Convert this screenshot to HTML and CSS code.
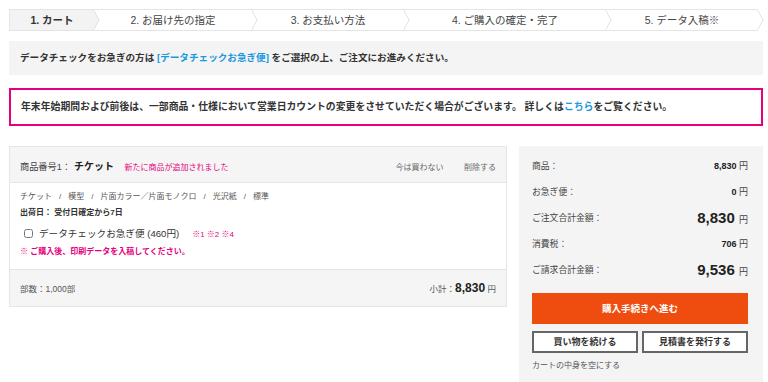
FILE: index.html
```html
<!DOCTYPE html>
<html lang="ja">
<head>
  <meta charset="UTF-8">
  <title>カート</title>
  <link rel="stylesheet" href="styles.css">
</head>
<body>
  <!-- ステップ -->
  <ol class="steps">
    <li class="step step-1 is-current">1. カート</li>
    <li class="step step-2">2. お届け先の指定</li>
    <li class="step step-3">3. お支払い方法</li>
    <li class="step step-4">4. ご購入の確定・完了</li>
    <li class="step step-5">5. データ入稿※</li>
  </ol>

  <div class="info-bar">
    データチェックをお急ぎの方は <a href="#" class="link">[データチェックお急ぎ便]</a> をご選択の上、ご注文にお進みください。
  </div>

  <div class="notice">
    年末年始期間および前後は、一部商品・仕様において営業日カウントの変更をさせていただく場合がございます。 詳しくは<a href="#" class="link">こちら</a>をご覧ください。
  </div>

  <div class="main">
    <!-- カート商品 -->
    <div class="cart-item">
      <div class="item-head">
        <div class="item-title">
          <span class="item-no">商品番号1：</span><span class="item-name">チケット</span>
          <span class="item-added">新たに商品が追加されました</span>
        </div>
        <div class="item-actions">
          <a href="#">今は買わない</a>
          <a href="#">削除する</a>
        </div>
      </div>
      <div class="item-body">
        <p class="item-spec">
          <span>チケット</span><span class="sep">/</span><span>模型</span><span class="sep">/</span><span>片面カラー／片面モノクロ</span><span class="sep">/</span><span>光沢紙</span><span class="sep">/</span><span>標準</span>
        </p>
        <p class="item-ship">出荷日： 受付日確定から7日</p>
        <label class="item-option">
          <input type="checkbox">
          <span class="option-name">データチェックお急ぎ便 (460円)</span>
          <span class="option-note">※1 ※2 ※4</span>
        </label>
        <p class="item-warn">※ ご購入後、印刷データを入稿してください。</p>
      </div>
      <div class="item-foot">
        <span>部数：1,000部</span>
        <span>小計：<b class="subtotal">8,830</b> 円</span>
      </div>
    </div>

    <!-- 合計 -->
    <div class="summary">
      <div class="sum-row"><span>商品：</span><span class="price">8,830 <small>円</small></span></div>
      <div class="sum-row"><span>お急ぎ便：</span><span class="price">0 <small>円</small></span></div>
      <div class="sum-row"><span>ご注文合計金額：</span><span class="price price-big">8,830 <small>円</small></span></div>
      <div class="sum-row"><span>消費税：</span><span class="price">706 <small>円</small></span></div>
      <div class="sum-row"><span>ご請求合計金額：</span><span class="price price-big">9,536 <small>円</small></span></div>
      <a href="#" class="btn-buy">購入手続きへ進む</a>
      <div class="sub-btns">
        <a href="#" class="btn-sub">買い物を続ける</a>
        <a href="#" class="btn-sub">見積書を発行する</a>
      </div>
      <a href="#" class="empty-link">カートの中身を空にする</a>
    </div>
  </div>
</body>
</html>
```

FILE: styles.css
```css
/* 全体 */
body {
  margin: 0;
  padding: 9px 5px 0 9px;
  font-family: "Liberation Sans", "Noto Sans CJK JP", sans-serif;
  color: #333;
  background: #fff;
  overflow: hidden;
}

a {
  text-decoration: none;
  color: inherit;
}

p {
  margin: 0;
}

.link {
  color: #1a98e0;
}

/* ステップ */
.steps {
  display: flex;
  list-style: none;
  margin: 0;
  padding: 0;
  height: 20px;
  border-top: 1px solid #e4e4e4;
  border-bottom: 1px solid #e4e4e4;
  border-left: 1px solid #e4e4e4;
  width: 748px;
}

.step {
  position: relative;
  font-size: 10.5px;
  line-height: 20px;
  text-align: center;
  color: #444;
  background: #fff;
}

.step::after {
  content: "";
  position: absolute;
  top: 3px;
  right: -7px;
  width: 13px;
  height: 13px;
  border-top: 1px solid #dcdcdc;
  border-right: 1px solid #dcdcdc;
  background: inherit;
  transform: scaleX(0.55) rotate(45deg);
  z-index: 1;
}

.step-1 { width: 84px; }
.step-2 { width: 158px; }
.step-3 { width: 152px; }
.step-4 { width: 202px; }
.step-5 { width: 152px; }

.is-current {
  background: #f3f3f3;
  font-weight: bold;
  color: #333;
}

/* お知らせ */
.info-bar {
  margin-top: 10px;
  background: #f4f4f4;
  height: 34px;
  line-height: 34px;
  padding: 0 11px;
  font-size: 9.6px;
  font-weight: bold;
}

.notice {
  margin-top: 13px;
  border: 2px solid #e6007e;
  height: 34px;
  line-height: 34px;
  padding: 0 10px;
  font-size: 9.85px;
  font-weight: bold;
}

/* メイン */
.main {
  margin-top: 20px;
  display: flex;
  align-items: flex-start;
  gap: 12px;
}

.cart-item {
  width: 496px;
  border: 1px solid #e6e6e6;
}

.item-head {
  height: 35px;
  background: #f5f5f5;
  border-bottom: 1px solid #e6e6e6;
  display: flex;
  justify-content: space-between;
  align-items: center;
  padding: 0 10px;
}

.item-no {
  font-size: 9.2px;
  color: #444;
  margin-right: 3px;
}

.item-name {
  font-size: 10px;
  font-weight: bold;
  color: #222;
  margin-right: 6px;
}

.item-added {
  font-size: 8px;
  color: #e6007e;
}

.item-actions a {
  font-size: 8px;
  color: #666;
  margin-left: 16px;
}

.item-body {
  padding: 6px 10px 10px;
  font-size: 8px;
}

.item-spec {
  line-height: 16px;
  color: #555;
}

.sep {
  margin: 0 7px;
}

.item-ship {
  line-height: 16px;
  font-weight: bold;
  color: #333;
}

.item-option {
  display: flex;
  align-items: center;
  height: 24px;
  padding-left: 4px;
}

.item-option input {
  width: 9px;
  height: 9px;
  margin: 0 6px 0 0;
}

.option-name {
  font-size: 9.6px;
  color: #333;
  margin-right: 13px;
}

.option-note {
  font-size: 8px;
  color: #e6007e;
}

.item-warn {
  line-height: 14px;
  font-weight: bold;
  color: #e6007e;
}

.item-foot {
  height: 36px;
  border-top: 1px solid #e6e6e6;
  background: #f5f5f5;
  display: flex;
  justify-content: space-between;
  align-items: center;
  padding: 0 10px;
  font-size: 8.5px;
  color: #555;
}

.subtotal {
  font-size: 12px;
  color: #222;
}

/* 合計 */
.summary {
  width: 216px;
  background: #f4f4f4;
  padding: 6px 15px 16px 13px;
}

.sum-row {
  height: 26px;
  display: flex;
  justify-content: space-between;
  align-items: center;
  font-size: 8.8px;
  color: #444;
}

.price {
  font-weight: bold;
  font-size: 9px;
  color: #222;
}

.price small {
  font-weight: normal;
  font-size: 9px;
  color: #444;
}

.price-big {
  font-size: 15px;
}

.btn-buy {
  display: block;
  margin-top: 11px;
  height: 31px;
  line-height: 31px;
  background: #ef4c0f;
  color: #fff;
  text-align: center;
  font-size: 9.5px;
  font-weight: bold;
}

.sub-btns {
  margin-top: 7px;
  display: grid;
  grid-template-columns: 1fr 1fr;
  gap: 4px;
}

.btn-sub {
  display: block;
  height: 18px;
  line-height: 18px;
  border: 2px solid #666;
  background: #fff;
  text-align: center;
  font-size: 9px;
  font-weight: bold;
  color: #333;
}

.empty-link {
  display: block;
  margin-top: 6px;
  line-height: 14px;
  font-size: 8px;
  color: #555;
}
```
